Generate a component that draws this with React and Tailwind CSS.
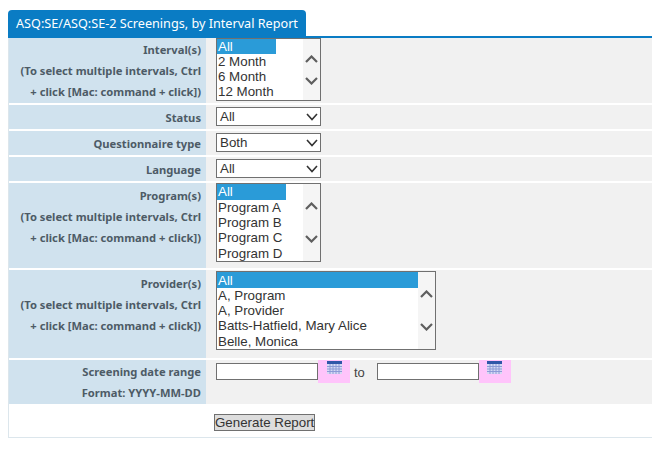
import React from "react";

const labelText = "font-['Noto_Sans',sans-serif] text-[11.2px] font-bold text-[#4d5b66] leading-[21px]";

const Chevron = ({ up }) => (
  <svg width="13" height="8" viewBox="0 0 13 8" fill="none" stroke="#5f5f5f" strokeWidth="2.2">
    <path d={up ? "M1 7L6.5 1.5L12 7" : "M1 1L6.5 6.5L12 1"} />
  </svg>
);

const ListBox = ({ items, width, height, selWidth, gap, topPad = 0, barH = 15 }) => (
  <div className="flex border border-[#707070] bg-white overflow-hidden" style={{ width, height }}>
    <div className="flex-1 overflow-hidden text-[13.33px] leading-[15px] text-[#333]">
      {items.map((item, i) => (
        <div
          key={item}
          className={i === 0 ? "bg-[#2a9bd8] text-white pl-[1px]" : "pl-[1px] h-[15.2px]"}
          style={i === 0 ? { width: selWidth, paddingTop: topPad, height: barH } : undefined}
        >
          {item}
        </div>
      ))}
    </div>
    <div className="w-[17px] shrink-0 bg-[#f5f5f5] flex flex-col items-center justify-center pr-[1px]" style={{ gap }}>
      <Chevron up />
      <Chevron />
    </div>
  </div>
);

const Select = ({ value }) => (
  <div className="flex items-center justify-between w-[105px] h-[19px] border border-[#707070] bg-white pl-[3px] pr-[2px] text-[13.33px] text-[#333]">
    <span>{value}</span>
    <svg width="12" height="8" viewBox="0 0 12 8" fill="none" stroke="#333" strokeWidth="1.6">
      <path d="M1 1L6 6.5L11 1" />
    </svg>
  </div>
);

const CalIcon = () => (
  <div className="w-[32px] h-[23px] bg-[#ffc4fb] flex justify-center items-start">
    <svg width="15" height="13" viewBox="0 0 15 13" className="mt-[1px]">
      <rect width="15" height="13" fill="#d5d9f4" />
      <rect width="15" height="3" fill="#2f55a8" />
      <path d="M0 5.5H15M0 8H15M0 10.5H15M3 3V13M6 3V13M9 3V13M12 3V13" stroke="#8d9ad6" strokeWidth="1" />
    </svg>
  </div>
);

const Row = ({ h, mt, children, label }) => (
  <div className="flex" style={{ height: h, marginTop: mt }}>
    <div className="w-[197px] shrink-0 bg-[#d0e2ee] pr-[5px] text-right">{label}</div>
    <div className="flex-1 bg-[#f1f1f1] pl-[10px]">{children}</div>
  </div>
);

const MultiLabel = ({ title, pt = 1 }) => (
  <div className={labelText} style={{ paddingTop: pt }}>
    <div>{title}</div>
    <div>(To select multiple intervals, Ctrl</div>
    <div>+ click [Mac: command + click])</div>
  </div>
);

const SingleLabel = ({ title }) => (
  <div className={labelText + " pt-[2px]"}>{title}</div>
);

export default function App() {
  return (
    <div className="w-[653px] h-[466px] bg-white pt-[10px] pl-[8px] pr-[1px] font-['Liberation_Sans',sans-serif]">
      <div className="h-[26px] bg-[#0a7cc4] rounded-t-[4px] px-[8px] pt-[5px] text-[12.65px] leading-[16px] text-white font-['Noto_Sans',sans-serif] w-[298px] whitespace-nowrap">
        ASQ:SE/ASQ:SE-2 Screenings, by Interval Report
      </div>
      <div className="h-[2px] bg-[#0a7cc4]" />
      <div className="border-l border-b border-[#dce6ec]">
        <Row h={65} label={<MultiLabel title="Interval(s)" />}>
          <ListBox width={105} height={63} selWidth={59} gap={14} items={["All", "2 Month", "6 Month", "12 Month"]} />
        </Row>
        <Row h={24} mt={2} label={<SingleLabel title="Status" />}>
          <div className="pt-[2px]"><Select value="All" /></div>
        </Row>
        <Row h={24} mt={2} label={<SingleLabel title="Questionnaire type" />}>
          <div className="pt-[2px]"><Select value="Both" /></div>
        </Row>
        <Row h={24} mt={2} label={<SingleLabel title="Language" />}>
          <div className="pt-[2px]"><Select value="All" /></div>
        </Row>
        <Row h={85} mt={2} label={<MultiLabel title="Program(s)" pt={2} />}>
          <ListBox width={105} height={79} selWidth={69} gap={25} barH={16} items={["All", "Program A", "Program B", "Program C", "Program D"]} />
        </Row>
        <Row h={88} mt={2} label={<MultiLabel title="Provider(s)" pt={3} />}>
          <div className="pt-[1px]">
            <ListBox width={220} height={79} selWidth={201} gap={25} topPad={1} barH={16} items={["All", "A, Program", "A, Provider", "Batts-Hatfield, Mary Alice", "Belle, Monica"]} />
          </div>
        </Row>
        <Row
          h={44}
          mt={2}
          label={
            <div className={labelText + " pt-[1px]"}>
              <div>Screening date range</div>
              <div>Format: YYYY-MM-DD</div>
            </div>
          }
        >
          <div className="flex items-start">
            <div className="mt-[3px] w-[102px] h-[17px] border border-[#707070] bg-white" />
            <CalIcon />
            <span className="ml-[4px] mr-[12px] mt-[3px] text-[13px] text-[#444]">to</span>
            <div className="mt-[3px] w-[102px] h-[17px] border border-[#707070] bg-white" />
            <CalIcon />
          </div>
        </Row>
        <div className="h-[33px] pl-[205px] pt-[10px]">
          <button className="block w-[101px] h-[17px] border border-[#707070] bg-[#dddddd] text-[13.33px] leading-[15px] text-[#333] whitespace-nowrap">
            Generate Report
          </button>
        </div>
      </div>
    </div>
  );
}
